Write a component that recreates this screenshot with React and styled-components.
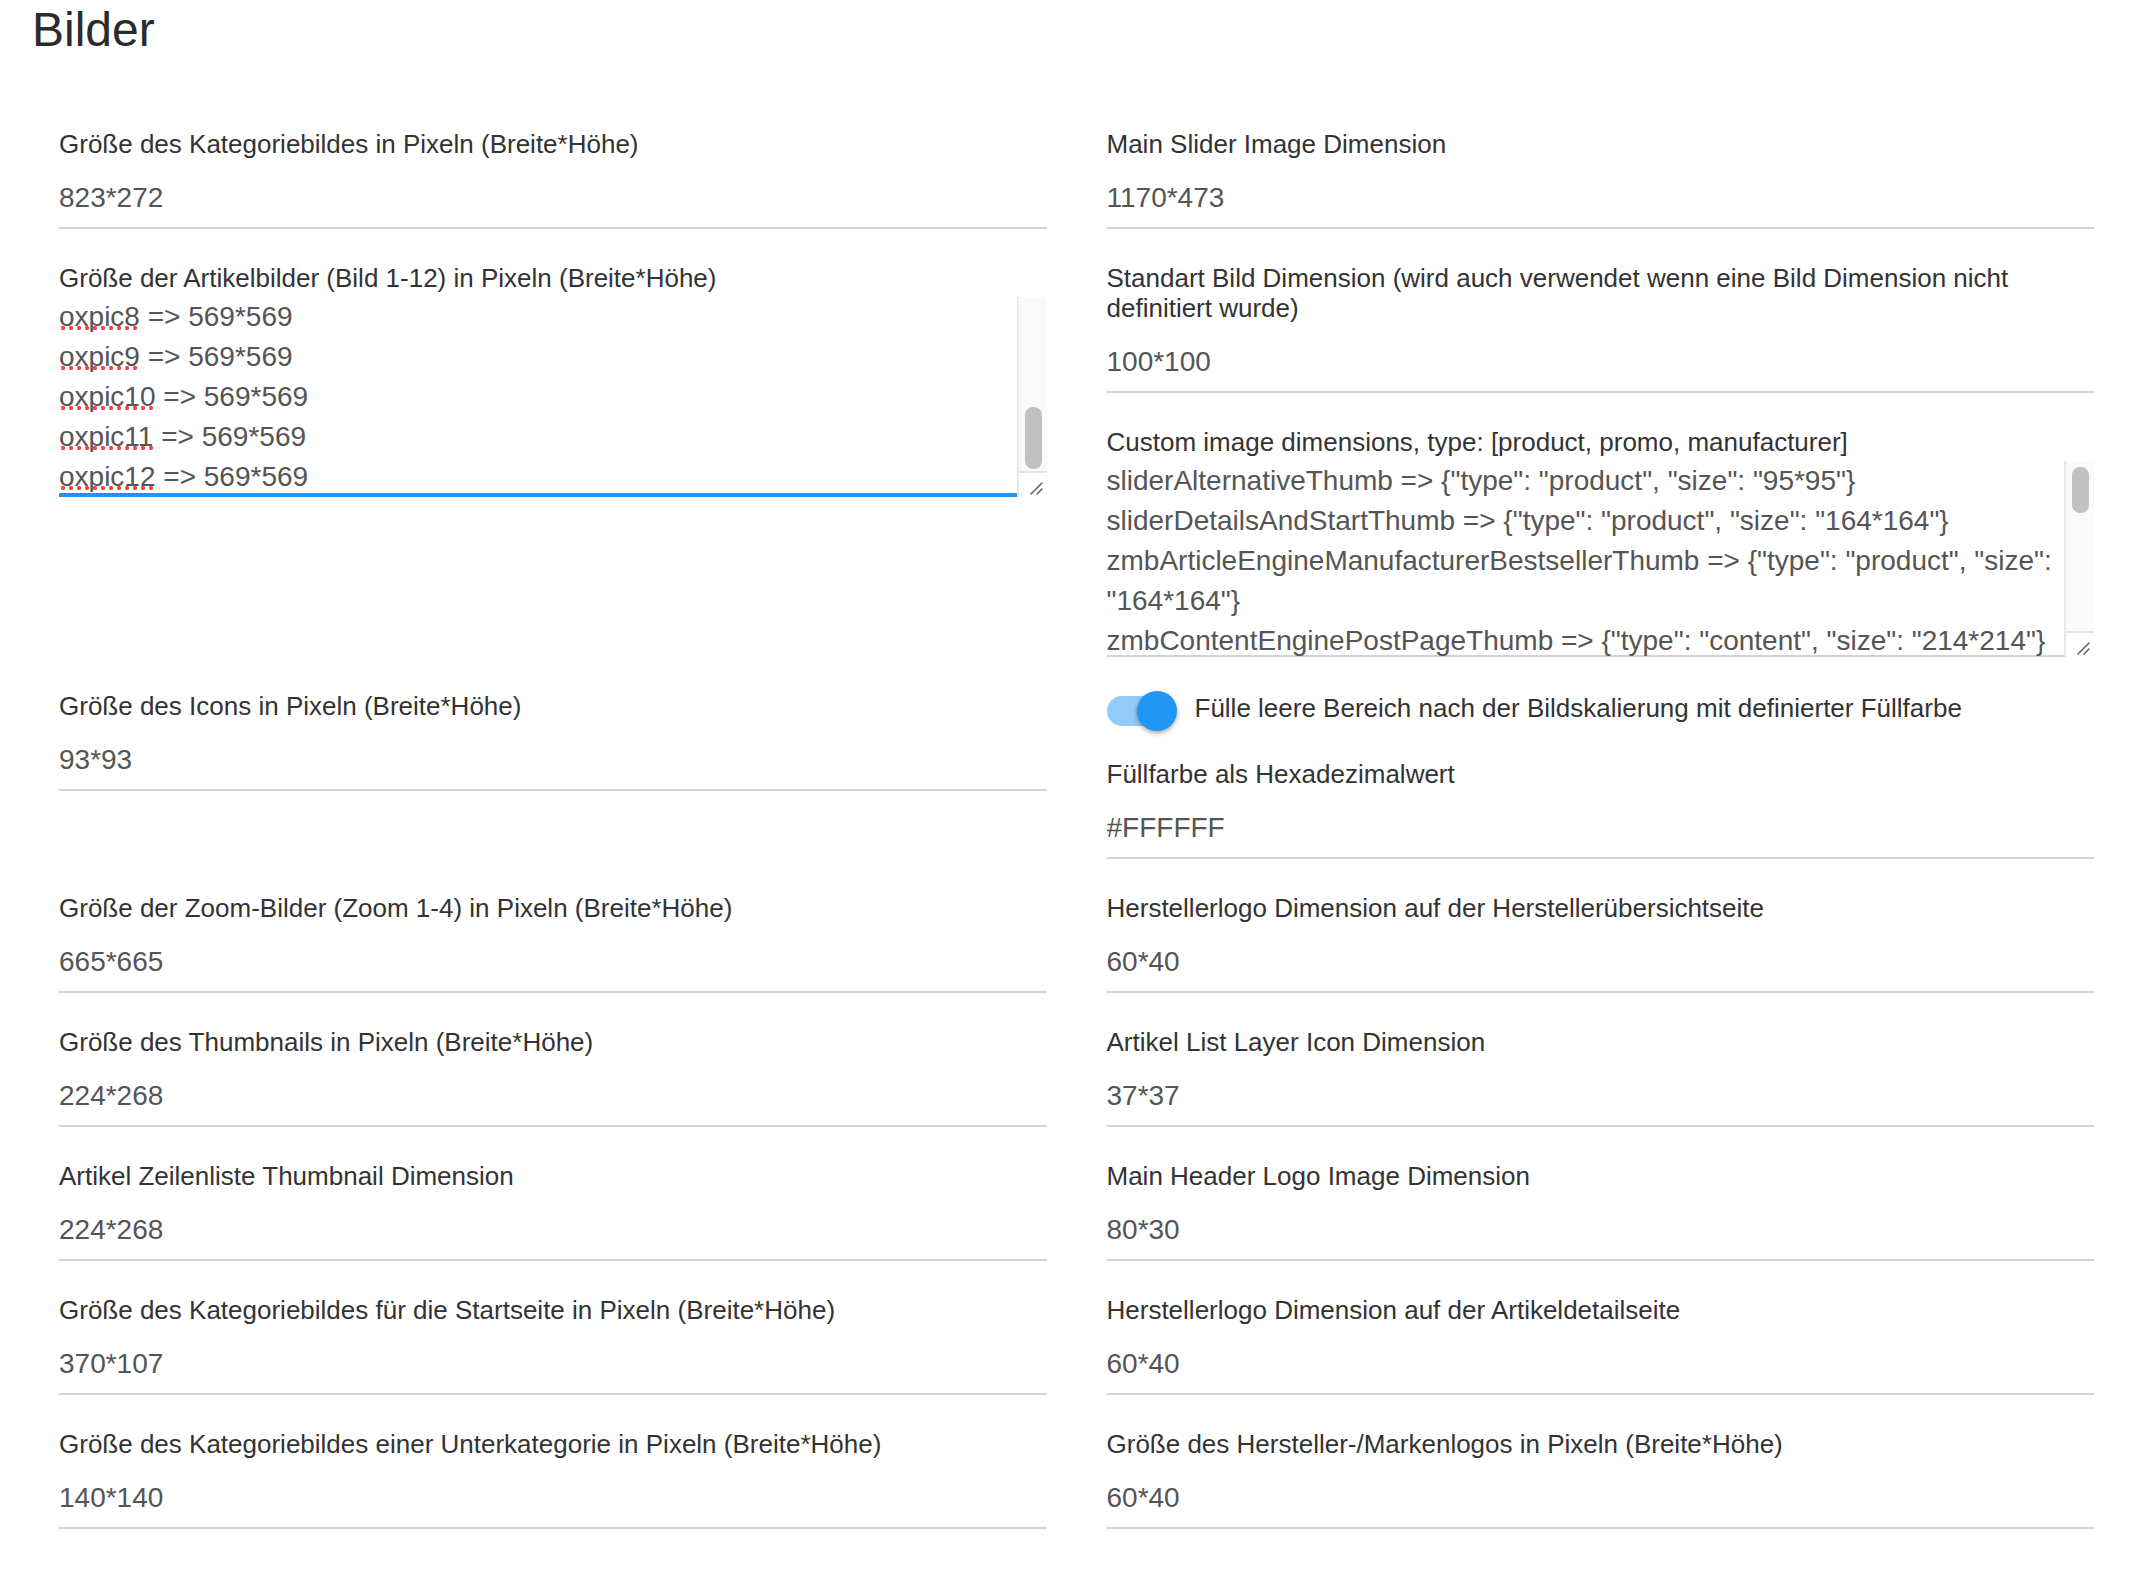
import { useLayoutEffect, useRef } from 'react';
import styled, { createGlobalStyle } from 'styled-components';

const GlobalStyle = createGlobalStyle`
  html, body {
    margin: 0;
    background: #fff;
  }
  body {
    font-family: "Liberation Sans", Arial, Helvetica, sans-serif;
    color: #333;
  }
`;

const Page = styled.div`
  padding: 0 32px 40px;
`;

const Title = styled.h2`
  margin: 2px 0 0;
  font-size: 48px;
  line-height: 56px;
  font-weight: 400;
  color: #2b2b2b;
`;

const Form = styled.div`
  display: grid;
  grid-template-columns: 1fr 1fr;
  column-gap: 60px;
  padding: 71px 26px 0 27px;
`;

const Cell = styled.div`
  display: flex;
  flex-direction: column;
  min-width: 0;
`;

const Field = styled.div`
  display: flex;
  flex-direction: column;
  margin-bottom: 34px;
`;

const Label = styled.label`
  display: block;
  font-size: 26px;
  line-height: 30px;
  color: #333;
`;

const Input = styled.input`
  display: block;
  width: 100%;
  box-sizing: border-box;
  height: 60px;
  margin-top: 10px;
  padding: 0;
  border: none;
  border-bottom: 2px solid #d3d3d3;
  outline: none;
  background: transparent;
  font-family: inherit;
  font-size: 28px;
  color: #555;
`;

const Box = styled.div`
  display: flex;
  height: ${(p) => p.$height}px;
  margin-top: 4px;
`;

const Content = styled.div`
  flex: 1;
  min-width: 0;
  overflow: hidden;
  font-size: 28px;
  line-height: 40px;
  color: #555;
  word-wrap: break-word;
  background-image: linear-gradient(${(p) => p.$line}, ${(p) => p.$line});
  background-repeat: no-repeat;
  background-position: left bottom;
  background-size: 100% ${(p) => p.$weight}px;
`;

const Rail = styled.div`
  flex: none;
  width: 30px;
  display: flex;
  flex-direction: column;
`;

const Track = styled.div`
  flex: 1;
  box-sizing: border-box;
  background: #fafafa;
  border-left: 2px solid #e8e8e8;
  border-bottom: 2px solid #e4e4e4;
  padding: 0 5px 0 6px;
`;

const Thumb = styled.div`
  height: ${(p) => p.$size}px;
  margin-top: ${(p) => p.$offset}px;
  border-radius: 8px;
  background: #c1c1c1;
`;

const Corner = styled.div`
  flex: none;
  height: 24px;
  box-sizing: border-box;
  border-left: 2px solid #e8e8e8;
  display: flex;
  align-items: flex-end;
  justify-content: flex-end;
  padding: 0 4px 2px 0;
`;

const Line = styled.div`
  white-space: pre-wrap;
`;

const Misspelled = styled.span`
  background-image: radial-gradient(circle, #f0474a 1.8px, transparent 2.4px);
  background-repeat: repeat-x;
  background-size: 8px 6px;
  background-position: 0 calc(100% - 1px);
`;

const ToggleRow = styled.div`
  display: flex;
  align-items: center;
  gap: 18px;
  height: 34px;
  margin-bottom: 34px;
  font-size: 26px;
  color: #333;
`;

const Toggle = styled.span`
  position: relative;
  flex: none;
  width: 70px;
  height: 40px;
  margin-top: 6px;
`;

const ToggleTrack = styled.span`
  display: block;
  width: 60px;
  height: 30px;
  margin-top: 5px;
  border-radius: 15px;
  background: ${(p) => (p.$on ? '#90cbf9' : '#bdbdbd')};
`;

const Knob = styled.span`
  position: absolute;
  top: 0;
  left: ${(p) => (p.$on ? 30 : 0)}px;
  width: 40px;
  height: 40px;
  border-radius: 50%;
  background: ${(p) => (p.$on ? '#2196f3' : '#f1f1f1')};
  box-shadow: 0 2px 5px rgba(0, 0, 0, 0.35);
`;

const Grip = () => (
  <svg width="14" height="14" viewBox="0 0 14 14">
    <path d="M13 2 L2 13 M13 8 L8 13" stroke="#666" strokeWidth="1.6" strokeLinecap="round" />
  </svg>
);

function TextField({ label, lines, height, focused, toEnd, spell, thumb }) {
  const ref = useRef(null);
  useLayoutEffect(() => {
    if (toEnd && ref.current) ref.current.scrollTop = ref.current.scrollHeight;
  }, [toEnd]);
  return (
    <Field>
      <Label>{label}</Label>
      <Box $height={height} role="textbox" aria-multiline="true">
        <Content
          ref={ref}
          $line={focused ? '#2196f3' : '#d3d3d3'}
          $weight={focused ? 4 : 2}
        >
          {lines.map((l, i) => {
            if (spell) {
              const [word, ...rest] = l.split(' ');
              return (
                <Line key={i}>
                  <Misspelled>{word}</Misspelled> {rest.join(' ')}
                </Line>
              );
            }
            return <Line key={i}>{l}</Line>;
          })}
        </Content>
        <Rail>
          <Track>
            <Thumb $offset={thumb.offset} $size={thumb.size} />
          </Track>
          <Corner>
            <Grip />
          </Corner>
        </Rail>
      </Box>
    </Field>
  );
}

function InputField({ label, value }) {
  return (
    <Field>
      <Label>{label}</Label>
      <Input defaultValue={value} readOnly />
    </Field>
  );
}

const artikelLines = Array.from({ length: 12 }, (_, i) => `oxpic${i + 1} => 569*569`);

const customLines = [
  'sliderAlternativeThumb => {"type": "product", "size": "95*95"}',
  'sliderDetailsAndStartThumb => {"type": "product", "size": "164*164"}',
  'zmbArticleEngineManufacturerBestsellerThumb => {"type": "product", "size": "164*164"}',
  'zmbContentEnginePostPageThumb => {"type": "content", "size": "214*214"}',
  'zmbContentEnginePostListThumb => {"type": "content", "size": "370*240"}',
  'zmbContentEngineTeaserThumb => {"type": "content", "size": "270*180"}',
  'zmbPromoSliderThumb => {"type": "promo", "size": "1170*473"}',
  'zmbPromoBannerThumb => {"type": "promo", "size": "570*300"}',
  'zmbPromoTeaserThumb => {"type": "promo", "size": "370*107"}',
  'zmbManufacturerSliderThumb => {"type": "manufacturer", "size": "140*80"}',
  'zmbManufacturerListThumb => {"type": "manufacturer", "size": "185*100"}',
  'zmbManufacturerDetailThumb => {"type": "manufacturer", "size": "60*40"}',
  'zmbArticleEngineCrossSellingThumb => {"type": "product", "size": "164*164"}',
];

export default function App() {
  return (
    <>
      <GlobalStyle />
      <Page>
        <Title>Bilder</Title>
        <Form>
          <Cell>
            <InputField label="Größe des Kategoriebildes in Pixeln (Breite*Höhe)" value="823*272" />
          </Cell>
          <Cell>
            <InputField label="Main Slider Image Dimension" value="1170*473" />
          </Cell>

          <Cell>
            <TextField
              label="Größe der Artikelbilder (Bild 1-12) in Pixeln (Breite*Höhe)"
              lines={artikelLines}
              height={200}
              focused
              toEnd
              spell
              thumb={{ offset: 110, size: 62 }}
            />
          </Cell>
          <Cell>
            <InputField
              label="Standart Bild Dimension (wird auch verwendet wenn eine Bild Dimension nicht definitiert wurde)"
              value="100*100"
            />
            <TextField
              label="Custom image dimensions, type: [product, promo, manufacturer]"
              lines={customLines}
              height={196}
              thumb={{ offset: 6, size: 46 }}
            />
          </Cell>

          <Cell>
            <InputField label="Größe des Icons in Pixeln (Breite*Höhe)" value="93*93" />
          </Cell>
          <Cell>
            <ToggleRow>
              <Toggle>
                <ToggleTrack $on />
                <Knob $on />
              </Toggle>
              Fülle leere Bereich nach der Bildskalierung mit definierter Füllfarbe
            </ToggleRow>
            <InputField label="Füllfarbe als Hexadezimalwert" value="#FFFFFF" />
          </Cell>

          <Cell>
            <InputField label="Größe der Zoom-Bilder (Zoom 1-4) in Pixeln (Breite*Höhe)" value="665*665" />
          </Cell>
          <Cell>
            <InputField label="Herstellerlogo Dimension auf der Herstellerübersichtseite" value="60*40" />
          </Cell>

          <Cell>
            <InputField label="Größe des Thumbnails in Pixeln (Breite*Höhe)" value="224*268" />
          </Cell>
          <Cell>
            <InputField label="Artikel List Layer Icon Dimension" value="37*37" />
          </Cell>

          <Cell>
            <InputField label="Artikel Zeilenliste Thumbnail Dimension" value="224*268" />
          </Cell>
          <Cell>
            <InputField label="Main Header Logo Image Dimension" value="80*30" />
          </Cell>

          <Cell>
            <InputField label="Größe des Kategoriebildes für die Startseite in Pixeln (Breite*Höhe)" value="370*107" />
          </Cell>
          <Cell>
            <InputField label="Herstellerlogo Dimension auf der Artikeldetailseite" value="60*40" />
          </Cell>

          <Cell>
            <InputField label="Größe des Kategoriebildes einer Unterkategorie in Pixeln (Breite*Höhe)" value="140*140" />
          </Cell>
          <Cell>
            <InputField label="Größe des Hersteller-/Markenlogos in Pixeln (Breite*Höhe)" value="60*40" />
          </Cell>
        </Form>
      </Page>
    </>
  );
}
